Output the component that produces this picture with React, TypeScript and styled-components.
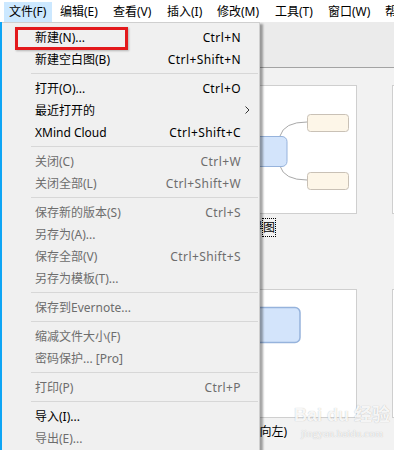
import React from "react";
import styled, { createGlobalStyle } from "styled-components";

const GlobalStyle = createGlobalStyle`
  html, body {
    margin: 0;
    padding: 0;
    background: #f0f0f0;
  }
  body {
    font-family: "Noto Sans", "Noto Sans CJK SC", sans-serif;
    font-size: 12px;
    color: #000;
  }
`;

interface IMenuItem {
  label: string;
  shortcut?: string;
  disabled?: boolean;
  submenu?: boolean;
}

const menuTitles = [
  { label: "文件(F)", width: 48 },
  { label: "编辑(E)", width: 50 },
  { label: "查看(V)", width: 51 },
  { label: "插入(I)", width: 47 },
  { label: "修改(M)", width: 55 },
  { label: "工具(T)", width: 50 },
  { label: "窗口(W)", width: 54 },
  { label: "帮助(H)", width: 50 },
];

const menuGroups: IMenuItem[][] = [
  [
    { label: "新建(N)...", shortcut: "Ctrl+N" },
    { label: "新建空白图(B)", shortcut: "Ctrl+Shift+N" },
  ],
  [
    { label: "打开(O)...", shortcut: "Ctrl+O" },
    { label: "最近打开的", submenu: true },
    { label: "XMind Cloud", shortcut: "Ctrl+Shift+C" },
  ],
  [
    { label: "关闭(C)", shortcut: "Ctrl+W", disabled: true },
    { label: "关闭全部(L)", shortcut: "Ctrl+Shift+W", disabled: true },
  ],
  [
    { label: "保存新的版本(S)", shortcut: "Ctrl+S", disabled: true },
    { label: "另存为(A)...", disabled: true },
    { label: "保存全部(V)", shortcut: "Ctrl+Shift+S", disabled: true },
    { label: "另存为模板(T)...", disabled: true },
  ],
  [{ label: "保存到Evernote...", disabled: true }],
  [
    { label: "缩减文件大小(F)", disabled: true },
    { label: "密码保护... [Pro]", disabled: true },
  ],
  [{ label: "打印(P)", shortcut: "Ctrl+P", disabled: true }],
  [
    { label: "导入(I)..." },
    { label: "导出(E)...", disabled: true },
  ],
];

const Page = styled.div`
  position: relative;
  width: 394px;
  height: 450px;
  overflow: hidden;
  display: flex;
  flex-direction: column;
`;

const MenuBar = styled.div`
  height: 22px;
  flex-shrink: 0;
  background: #fff;
  display: flex;
  align-items: stretch;
  padding: 2px 0 0 4px;
  box-sizing: border-box;
  gap: 3px;
  white-space: nowrap;
  overflow: hidden;
`;

const MenuTitle = styled.div<{ $w: number; $open?: boolean }>`
  width: ${(p) => p.$w}px;
  flex-shrink: 0;
  padding-left: 4px;
  box-sizing: border-box;
  line-height: 18px;
  background: ${(p) => (p.$open ? "#cce8ff" : "transparent")};
  border: 1px solid ${(p) => (p.$open ? "#cce8ff" : "transparent")};
  border-bottom: none;
`;

const Main = styled.div`
  flex: 1;
  display: flex;
  min-height: 0;
`;

const Stripe = styled.div`
  position: relative;
  width: 2px;
  flex-shrink: 0;
  background: #0ea5f5;

  &::after {
    content: "";
    position: absolute;
    left: 0;
    top: 353px;
    width: 3px;
    height: 4px;
    background: #0ea5f5;
  }
`;

const Workspace = styled.div`
  position: relative;
  flex: 1;
  display: flex;
  flex-direction: column;
  overflow: hidden;
`;

const Toolbar = styled.div`
  height: 45px;
  flex-shrink: 0;
  background: #ebebeb;
  border-bottom: 1px solid #a3a3a3;
`;

const Gallery = styled.div`
  display: grid;
  grid-template-columns: 130px 130px;
  column-gap: 35px;
  row-gap: 42px;
  padding: 17px 0 0 225px;
  background: #f2f2f2;
  flex: 1;
`;

const Cell = styled.div`
  display: flex;
  flex-direction: column;
`;

const Card = styled.div`
  height: 129px;
  background: #fff;
  border: 1px solid #cfcfcf;
  box-sizing: border-box;
  overflow: hidden;
`;

const Label = styled.div<{ $focus?: boolean; $shift?: number }>`
  margin-top: 6px;
  margin-left: ${(p) => p.$shift ?? 0}px;
  height: 16px;
  line-height: 16px;
  font-size: 12px;
  white-space: nowrap;
  color: #000;
  span {
    outline: ${(p) => (p.$focus ? "1px dotted #000" : "none")};
  }
`;

const Dropdown = styled.div`
  position: absolute;
  left: 0;
  top: 0;
  width: 258px;
  padding: 3px 0 4px;
  background: #f0f0f0;
  border-top: 1px solid #cfcfcf;
  border-right: 1px solid #cfcfcf;
  box-sizing: border-box;
  box-shadow: 3px 2px 2px rgba(0, 0, 0, 0.35);
  z-index: 2;
`;

const Item = styled.div<{ $disabled?: boolean }>`
  position: relative;
  height: 22px;
  display: flex;
  align-items: center;
  padding: 0 18px 0 33px;
  color: ${(p) => (p.$disabled ? "#6d6d6d" : "#000")};
  white-space: nowrap;
`;

const ItemLabel = styled.span`
  flex: 1;
`;

const Shortcut = styled.span`
  text-align: right;
  letter-spacing: 0.4px;
`;

const Arrow = styled.svg`
  position: absolute;
  right: 9px;
  top: 7px;
`;

const Separator = styled.div`
  height: 1px;
  margin: 3px 1px 3px 29px;
  background: #d7d7d7;
`;

const Highlight = styled.div`
  position: absolute;
  left: 13px;
  top: 4px;
  width: 113px;
  height: 23px;
  border: 3px solid #e3191c;
  box-sizing: border-box;
  box-shadow: 1px 1px 2px rgba(0, 0, 0, 0.25);
  pointer-events: none;
`;

const Watermark = styled.div`
  position: absolute;
  left: 292px;
  top: 382px;
  display: flex;
  flex-direction: column;
  align-items: center;
  white-space: nowrap;
  color: rgba(255, 255, 255, 0.9);
  text-shadow: 0 0 1px rgba(0, 0, 0, 0.28);
  pointer-events: none;
  z-index: 3;
`;

const MarkMain = styled.div`
  font-family: "Liberation Sans", "Noto Sans CJK SC", sans-serif;
  font-size: 18px;
  font-weight: bold;
  line-height: 22px;
`;

const MarkSub = styled.div`
  font-family: "Liberation Serif", serif;
  font-size: 11px;
  line-height: 14px;
`;

function MenuRow({ item }: { item: IMenuItem }) {
  return (
    <Item $disabled={item.disabled}>
      <ItemLabel>{item.label}</ItemLabel>
      {item.shortcut && <Shortcut>{item.shortcut}</Shortcut>}
      {item.submenu && (
        <Arrow width="5" height="8" viewBox="0 0 5 8">
          <path d="M0.5 0.5 L4 4 L0.5 7.5" fill="none" stroke="#333" strokeWidth="1" />
        </Arrow>
      )}
    </Item>
  );
}

function App() {
  return (
    <>
      <GlobalStyle />
      <Page>
        <MenuBar>
          {menuTitles.map((t, i) => (
            <MenuTitle key={t.label} $w={t.width} $open={i === 0}>
              {t.label}
            </MenuTitle>
          ))}
        </MenuBar>
        <Main>
          <Stripe />
          <Workspace>
            <Toolbar />
            <Gallery>
              <Cell>
                <Card>
                  <svg width="128" height="127" viewBox="0 0 128 127">
                    <path d="M52 50 Q56 36 79 36" fill="none" stroke="#a9a9a9" strokeWidth="1" />
                    <path d="M52 80 Q56 94 79 94" fill="none" stroke="#a9a9a9" strokeWidth="1" />
                    <rect x="8" y="50.5" width="51" height="30" rx="5" fill="#d3e4fb" stroke="#96b3dc" />
                    <rect x="79.5" y="28.5" width="41" height="17" rx="3" fill="#fdf6e8" stroke="#c9c1b6" />
                    <rect x="79.5" y="86.5" width="41" height="17" rx="3" fill="#fdf6e8" stroke="#c9c1b6" />
                  </svg>
                </Card>
                <Label $focus>
                  思维导<span>图</span>
                </Label>
              </Cell>
              <Cell>
                <Card />
              </Cell>
              <Cell>
                <Card>
                  <svg width="128" height="127" viewBox="0 0 128 127">
                    <rect x="8" y="17.5" width="64" height="35" rx="5" fill="#d3e4fb" stroke="#96b3dc" strokeWidth="1.5" />
                  </svg>
                </Card>
                <Label $shift={-7}>逻辑图(向左)</Label>
              </Cell>
              <Cell>
                <Card />
              </Cell>
            </Gallery>

            <Dropdown>
              {menuGroups.map((group, gi) => (
                <React.Fragment key={gi}>
                  {gi > 0 && <Separator />}
                  {group.map((item) => (
                    <MenuRow key={item.label} item={item} />
                  ))}
                </React.Fragment>
              ))}
              <Highlight />
            </Dropdown>

            <Watermark>
              <MarkMain>Bai du 经验</MarkMain>
              <MarkSub>jingyan.baidu.com</MarkSub>
            </Watermark>
          </Workspace>
        </Main>
      </Page>
    </>
  );
}

export default App;
